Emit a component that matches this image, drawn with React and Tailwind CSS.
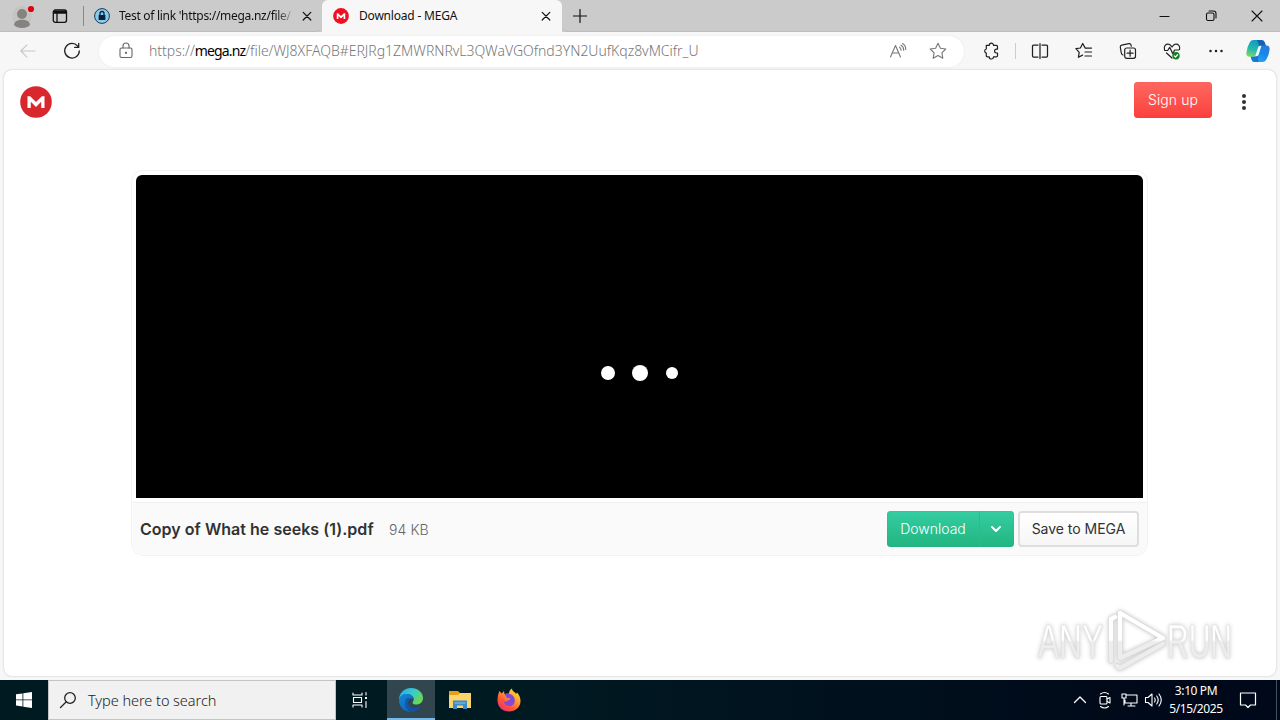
import React from 'react';

const Icon = ({ w = 20, h = 20, className = '', children, sw = 1.1 }) => (
  <svg width={w} height={h} viewBox={`0 0 ${w} ${h}`} fill="none" stroke="currentColor" strokeWidth={sw} strokeLinecap="round" strokeLinejoin="round" className={`block shrink-0 ${className}`}>
    {children}
  </svg>
);

const Cross = () => (
  <Icon w={10} h={10} sw={1.2}><path d="M1.2 1.4l7.6 7.600M8.800 1.400l-7.600 7.600" /></Icon>
);

const MegaMark = ({ size, fill = '#d9272e' }) => (
  <svg width={size} height={size} viewBox="0 0 32 32" className="block shrink-0">
    <circle cx="16" cy="16" r="15.8" fill={fill} />
    <path d="M7.5 22V10.300h2.700l5.800 5.800 5.800-5.800h2.700V22h-3.300v-6.200L16 21l-5.200-5.200V22z" fill="#fff" />
  </svg>
);

function TabStrip() {
  return (
    <div className="flex h-8 w-full bg-[#cbcbcb] text-[#111]">
      <div className="flex h-8 w-[322px] items-center border-b border-[#bdbdbd] rounded-br-md">
        <svg width="24" height="26" viewBox="0 0 24 26" className="ml-3 mt-1 block">
          <circle cx="10" cy="11" r="10" fill="#c6c4c2" />
          <circle cx="10" cy="9" r="5" fill="#858380" />
          <path d="M2 20c0-7 16-7 16 0-3 4-13 4-16 0z" fill="#858380" />
          <circle cx="19" cy="4" r="3.1" fill="#e3000f" />
        </svg>
        <Icon w={16} h={16} className="ml-4" sw={1.3}>
          <rect x="1.3" y="2" width="13.2" height="12.300" rx="2" />
          <path d="M2 3.500h12M2 5h12M5 5v9" />
        </Icon>
        <div className="ml-[15px] h-5 w-px bg-[#888]" />
        <svg width="16" height="16" viewBox="0 0 16 16" className="ml-[10px] block">
          <circle cx="8" cy="8" r="7.4" fill="#8ccbef" stroke="#123c58" strokeWidth="1" />
          <rect x="4.6" y="7" width="6.8" height="5" rx=".6" fill="#0a2436" />
          <path d="M6 7V5.5a2 2 0 014 0V7" fill="none" stroke="#0a2436" strokeWidth="1.3" />
        </svg>
        <div className="ml-[9px] w-[174px] whitespace-nowrap bg-linear-to-r from-[#111] from-90% to-[#bbb] bg-clip-text font-['Noto_Sans',sans-serif] text-[12px] leading-5 tracking-[-0.29px] text-transparent">Test of link 'https://mega.nz/file/</div>
        <div className="ml-[9px]"><Cross /></div>
      </div>
      <div className="flex h-8 w-60 items-center rounded-t-md bg-[#f7f7f7]">
        <div className="ml-[11px]"><MegaMark size={16} fill="#ee1024" /></div>
        <div className="ml-[10px] w-[173px] whitespace-nowrap font-['Noto_Sans',sans-serif] text-[12px] leading-5 tracking-[-0.2px]">Download - MEGA</div>
        <div className="ml-[9px]"><Cross /></div>
      </div>
      <div className="flex h-8 flex-1 items-center rounded-bl-md border-b border-[#bdbdbd]">
        <Icon w={14} h={14} className="ml-[10.500px]" sw={1.2}><path d="M7 .5v13M.5 7h13" /></Icon>
        <div className="ml-auto flex w-[138px]">
          <div className="flex w-[46px] justify-center"><Icon w={12} h={12}><path d="M1 6.5h9" /></Icon></div>
          <div className="flex w-[46px] justify-center"><Icon w={12} h={12}><rect x="1.5" y="3" width="7.5" height="7.5" rx="1.5" /><path d="M4 1h4.5Q11 1 11 3.5V8" /></Icon></div>
          <div className="flex w-[46px] justify-center"><Icon w={12} h={12}><path d="M1 1l10 10M11 1L1 11" /></Icon></div>
        </div>
      </div>
    </div>
  );
}

const Tool = ({ children }) => <div className="flex w-11 justify-center">{children}</div>;

function Toolbar() {
  return (
    <div className="flex h-[38px] w-full items-center bg-[#f7f7f7] text-[#202020]">
      <div className="ml-[6px] flex w-11 justify-center text-[#c8c8c8]"><Icon w={18} h={18}><path d="M16 9H2M8 2.8L1.8 9 8 15.2" /></Icon></div>
      <div className="flex w-11 justify-center"><Icon w={18} h={18} sw={1.3}><path d="M14.7 4.2A7.3 7.3 0 1016.3 9M15.7 1.4v4h-4" /></Icon></div>
      <div className="ml-[5px] flex h-[31px] w-[865px] items-center rounded-full bg-white text-[#777] shadow-[0_0_2px_#e5e5e5]">
        <Icon w={16} h={18} className="ml-[19px] text-[#666]"><rect x="2" y="6" width="12" height="9.5" rx="1.5" /><path d="M5 6V4a3 3 0 016 0v2" /><circle cx="8" cy="10.8" r=".6" fill="currentColor" /></Icon>
        <div className="ml-[15px] whitespace-nowrap font-['Noto_Sans',sans-serif] text-[14px] font-light leading-5 tracking-[-0.02px]">https://<span className="font-normal tracking-[-0.850px] text-black">mega.nz</span>/file/WJ8XFAQB#ERJRg1ZMWRNRvL3QWaVGOfnd3YN2UufKqz8vMCifr_U</div>
        <div className="ml-auto mr-[16px] flex items-center gap-[21px]">
          <Icon w={18} h={18}><path d="M1.500 15L6.500 3.500 11.500 15M3.400 11h6.200M10.500 5.200q1.600 1 1.600 3M12 3.200q2.800 1.600 2.700 5M13.500 1.500q3.500 2 3.200 6" /></Icon>
          <Icon w={20} h={18}><path d="M10 1.200l2.400 5 5.400.8-3.900 3.800.9 5.400-4.800-2.600-4.800 2.600.9-5.400L2.200 7l5.400-.8z" /></Icon>
        </div>
      </div>
      <div className="ml-[5px]"><Tool><Icon w={18} h={18} sw={1.2}><path d="M4.300 3.300h3a2.100 2.100 0 014.200 0h2.800q1.200 0 1.200 1.200v2.700h-1a1.900 1.900 0 000 3.800h1v2.700q0 1.200-1.200 1.200h-2.800a2.100 2.100 0 01-4.200 0H5.500q-1.200 0-1.200-1.200v-2.600a2.100 2.100 0 010-4.100z" /></Icon></Tool></div>
      <div className="ml-[2px] h-4 w-px bg-[#ccc]" />
      <div className="ml-[2px] flex">
        <Tool><Icon w={18} h={18} sw={1.25}><path d="M7 3H2.500Q1.500 3 1.500 4v10q0 1 1 1H7M11 3h4.500q1 0 1 1v10q0 1-1 1H11M9 1.500v15" /></Icon></Tool>
        <Tool><Icon w={18} h={18} sw={1.2}><path d="M10.200 6.100L7.700 1.500 5.400 6l-4.500.7 3.300 3.600-.8 5 4.200-2.200M10.200 6.100h6.300M10 10h6.500M10 14h6.500" /></Icon></Tool>
        <Tool><Icon w={18} h={18} sw={1.2}><path d="M4 13Q2.600 12.700 2.300 11L1.300 5.200Q1 3.600 2.700 3.200l7.200-1.500q1.700-.3 2.200 1.400l.2 1.100" /><rect x="5.700" y="6" width="10.800" height="10.300" rx="2" /><path d="M11.100 8.200v6M8.100 11.200h6" /></Icon></Tool>
        <Tool><Icon w={18} h={18} sw={1.2}><path d="M1.500 7.500C.5 4 3 1.700 5.500 2.200 7.400 2.400 8.400 4 9 5c.6-1 1.600-2.600 3.500-2.800C15 1.700 17.500 4 16.500 7.500M1.500 8.500h3.200l2-3.200 3 6.200 2-3.500h4M3.500 11l5.500 5" /><circle cx="13" cy="13.800" r="3.700" fill="#108022" stroke="none" /><path d="M11.300 13.900l1.200 1.100 2.200-2.300" stroke="#fff" /></Icon></Tool>
        <Tool><Icon w={18} h={18}><g fill="currentColor" stroke="none"><circle cx="3.500" cy="9" r="1.250" /><circle cx="9" cy="9" r="1.250" /><circle cx="14.500" cy="9" r="1.250" /></g></Icon></Tool>
      </div>
      <svg width="24" height="24" viewBox="0 0 24 24" className="ml-[8px] block">
        <defs>
          <linearGradient id="copA" x1=".5" y1="0" x2=".2" y2="1"><stop stopColor="#1398bd" /><stop offset=".55" stopColor="#25b8b0" /><stop offset="1" stopColor="#7fdc5a" /></linearGradient>
          <linearGradient id="copB" x1=".8" y1="0" x2=".3" y2="1"><stop stopColor="#2a78df" /><stop offset=".5" stopColor="#1689e8" /><stop offset="1" stopColor="#27aaf5" /></linearGradient>
        </defs>
        <path d="M7.500 1h8q2.600 0 3.300 2.500l1 3.500H16q-2.500 0-3.300 2.500L10.500 16q-.6 1.800-2.700 1.800H3.500Q0 17.800.4 13.500 1 8 3.800 3.200 5 1 7.500 1z" fill="url(#copA)" />
        <path d="M11 1h4.500q2.600 0 3.300 2.500l1 3.500H16q-1.500 0-2.400 1z" fill="#1560b5" />
        <path d="M16.500 23H8.800q-2.600 0-3.300-2.500l-.8-2.700H8q2.300 0 3-2.300L13 9q.8-2.500 3.300-2.500h4.200q3.500 0 3.100 4.300-.6 5.500-3.400 10-1.300 2.200-3.700 2.200z" fill="url(#copB)" />
        <path d="M4.700 17.800H8q2.300 0 3-2.300l.8-2.500.7 10H8.800q-2.600 0-3.300-2.500z" fill="#1468c8" opacity=".75" />
        <path d="M12.200 8.300q.6-1.500 2-1.500h1.200l-2.600 8.400q-.6 2-2.400 2H9.200z" fill="#f2fbff" />
      </svg>
    </div>
  );
}

function Watermark() {
  return (
    <svg width="208" height="72" viewBox="-2 -2 208 72" className="absolute left-[1034px] top-[605px] overflow-visible drop-shadow-[0_0_2px_#c4c4c4]">
      <defs><linearGradient id="wm" gradientUnits="userSpaceOnUse" x1="0" y1="2" x2="0" y2="64"><stop offset=".5" stopColor="#ffffff" /><stop offset=".53" stopColor="#ededed" /></linearGradient></defs>
      <g fill="url(#wm)" stroke="#e0e0e0" strokeWidth=".5" fontFamily="'Liberation Sans Narrow', 'Liberation Sans', sans-serif" fontSize="49" fontWeight="400">
        <text x="2" y="51" textLength="65" lengthAdjust="spacingAndGlyphs">ANY</text>
        <text x="131" y="51" textLength="65" lengthAdjust="spacingAndGlyphs">RUN</text>
      </g>
      <g fill="none" strokeLinejoin="round" strokeLinecap="round">
        <path d="M79 10l-4 2v42M84 6v45l43-20zM84 6l43 25M84 61l43-24M84 61l-3-2" stroke="#dcdcdc" strokeWidth="5.500" />
        <path d="M79 10l-4 2v42M84 6v45l43-20zM84 6l43 25M84 61l43-24M84 61l-3-2" stroke="url(#wm)" strokeWidth="4.200" />
      </g>
    </svg>
  );
}

function Page() {
  return (
    <div className="mx-1 h-[606px] w-[1272px] rounded-lg bg-white shadow-[0_0_2px_#bbb] font-['Inter',sans-serif]">
      <div className="flex h-[61px] items-center pt-[2px]">
        <div className="ml-4"><MegaMark size={32} /></div>
        <button className="-mt-1 ml-auto h-9 w-[78px] rounded bg-linear-to-b from-[#ff6761] to-[#fb3e3c] text-[14px] font-light tracking-[0.1px] text-white shadow-[inset_0_0_1px_#ef2929]">Sign up</button>
        <div className="ml-[30px] mr-[30px] flex w-1 flex-col gap-[2px]">
          <i className="size-1 rounded-full bg-[#303233]" /><i className="size-1 rounded-full bg-[#303233]" /><i className="size-1 rounded-full bg-[#303233]" />
        </div>
      </div>
      <div className="ml-[127px] mt-[39px] h-[386px] w-[1017px] rounded-xl border border-[#f2f2f2] bg-white">
        <div className="mx-1 mt-1 flex h-[323px] items-center justify-center rounded-t-md bg-black pt-[72px]">
          <div className="flex w-20 items-center">
            <div className="ml-px size-[14px] rounded-full bg-white" />
            <div className="ml-[17px] size-4 rounded-full bg-white" />
            <div className="ml-[18px] size-3 rounded-full bg-white" />
          </div>
        </div>
        <div className="mt-1 flex h-[53px] items-center rounded-b-xl border-t border-[#f0f0f0] bg-[#fafafa] pl-2 pr-2">
          <div className="w-[249px] whitespace-nowrap text-[16px] font-semibold tracking-[0.03px] text-[#303233]">Copy of What he seeks (1).pdf</div>
          <div className="whitespace-nowrap text-[14px] font-light tracking-[0.1px] text-[#666]">94 KB</div>
          <div className="ml-auto flex h-9 w-[127px] rounded bg-linear-to-b from-[#34cda2] to-[#22b580] text-white shadow-[inset_0_0_1px_#009a70]">
            <div className="flex w-[92px] items-center justify-center pb-px text-[14px] font-light">Download</div>
            <div className="flex flex-1 items-center justify-center border-l border-[#28bd8c] pr-[2px]">
              <Icon w={12} h={8} sw={2}><path d="M2 2l4 4 4-4" /></Icon>
            </div>
          </div>
          <button className="ml-1 h-9 w-[121px] rounded border-2 border-[#dedede] bg-linear-to-b from-white to-[#f6f6f6] pb-px text-[14px] tracking-[-0.02px] text-[#303233]">Save to MEGA</button>
        </div>
      </div>
    </div>
  );
}

function Taskbar() {
  return (
    <div className="flex h-10 w-full bg-linear-to-r from-[#001a22] from-40% to-[#000919] to-90% text-white">
      <div className="flex w-12 items-center justify-center">
        <svg width="16" height="16" viewBox="0 0 16 16" fill="#fff"><path d="M0 2.300l6.500-.9v6.100H0zM7.300 1.300L16 0v7.500H7.300zM0 8.300h6.500v6.100L0 13.500zM7.300 8.300H16V16l-8.700-1.300z" /></svg>
      </div>
      <div className="flex w-[288px] items-center border border-[#c4c4c4] bg-[#f1f1f1] text-[#222]">
        <Icon w={18} h={18} className="ml-[10px]" sw={1.300}><circle cx="11" cy="7" r="5.300" /><path d="M7.300 10.700L1.500 16.500" /></Icon>
        <div className="ml-[11px] mt-px whitespace-nowrap font-['Noto_Sans',sans-serif] text-[14.500px] font-light tracking-[-0.050px]">Type here to search</div>
      </div>
      <div className="flex w-[51px] items-center justify-center pr-[4px]">
        <Icon w={18} h={18}><path d="M2 2v2h9V2M2 16v-2h9v2M2.500 6.500h8v5h-8zM15 1.500V4M15 10.500v6" /><path d="M14 6h2v2h-2z" fill="currentColor" stroke="none" /></Icon>
      </div>
      <div className="flex w-12 items-center justify-center border-b-2 border-[#76b9ed] bg-[#31464f]">
        <svg width="24" height="24" viewBox="0 0 24 24" className="mt-px">
          <defs>
            <linearGradient id="edT" x1="0" y1="0" x2="1" y2=".5"><stop stopColor="#2aa5e5" /><stop offset=".55" stopColor="#36cbd0" /><stop offset="1" stopColor="#6bd653" /></linearGradient>
            <linearGradient id="edB" x1="0" y1="0" x2="1" y2="1"><stop stopColor="#1288db" /><stop offset="1" stopColor="#1157a9" /></linearGradient>
          </defs>
          <path d="M0 12C0 5 5 0 12 0c7 0 12 4.500 12 10 0 4-3 6.500-6.500 6.500-2.500 0-4-.8-4-1.800s1.200-1.500 1.200-3.500C14.700 8 11 6 7.500 6 4 6 1 8.500 0 12z" fill="url(#edT)" />
          <path d="M0 12C1 8 4 6 7.500 6c4 0 7 2 7.200 5C12 9.500 9 12 9 15c0 4 5 7 12.500 3.500C19.500 22 16 24 12 24 5 24 0 19 0 12z" fill="url(#edB)" />
          <path d="M8 10c-3 3-3 10 3 14 4 .3 8-1.500 10.500-5.500C15 21.500 9.500 19 9 15c0-2 1.500-4.500 4-5z" fill="#124c96" opacity=".65" />
        </svg>
      </div>
      <div className="flex w-[49px] items-center justify-center">
        <svg width="22" height="20" viewBox="0 0 22 20"><path d="M0 1h9l2 2h11v4H0z" fill="#e5a01a" /><path d="M0 5h9l2-2h11v15H0z" fill="#fbd56b" /><path d="M4 10.500h14V19h-4v-3.500H8V19H4z" fill="#3a8cc8" /><path d="M5.500 12h11v2h-11z" fill="#62a9d8" /></svg>
      </div>
      <div className="flex w-[49px] items-center justify-center">
        <svg width="24" height="24" viewBox="0 0 24 24">
          <defs><linearGradient id="ff" x1="1" y1="0" x2=".25" y2="1"><stop stopColor="#fff04f" /><stop offset=".35" stopColor="#ffb02a" /><stop offset=".7" stopColor="#ff5a38" /><stop offset="1" stopColor="#f02c6c" /></linearGradient></defs>
          <path d="M2.500 3l2.200 2.500L7 3l.5 3L12 5.500c0-2 1-4 3-5 0 3 3 3 4 5.500l1-1.500c2 2 3.500 5 3.500 8.500C23.500 19 18.500 23.500 12 23.500S.5 19 .5 12.500C.5 9 1 6 2.500 3z" fill="url(#ff)" />
          <path d="M7.500 6.500Q10 5 12.500 6c3.500.5 5.500 3.500 5.300 7-.3 3-2.600 5-5.600 5-3 0-5.200-2-5.200-4.700 1.500.7 3 .5 4-.8l2.500-1.300c-.2-1.200-3.300-.8-3.800-1.700C9 8.500 8.700 7.500 7.500 6.500z" fill="#8348d5" />
        </svg>
      </div>
      <div className="ml-auto flex items-center">
        <Icon w={14} h={12} sw={1.300}><path d="M1.500 8.500L7 3l5.500 5.500" /></Icon>
        <Icon w={16} h={18} className="ml-[10px]"><rect x="3" y="5.500" width="7" height="7.500" rx="1" /><path d="M10 8l3-1.500v5.500L10 10.500M3.500 3q4-3 8 0M3.500 15.500q4 3 8 0" /></Icon>
        <Icon w={18} h={18} className="ml-[7px]"><path d="M6 4h11v8H5V9M2 3h4v4H2zM4 7v7M8 15h7M11 12v3" /></Icon>
        <Icon w={18} h={18} className="ml-[6px]"><path d="M1.500 6.500H4L8 3v12l-4-3.500H1.500zM10.500 7q1.500 2 0 4M12.700 5q3 4 0 8M15 3q4.500 6 0 12" /></Icon>
        <div className="ml-[4px] w-[60px] whitespace-nowrap text-center font-['Noto_Sans',sans-serif] text-[12px] leading-[18px] tracking-[-0.400px]">
          <div>3:10 PM</div><div>5/15/2025</div>
        </div>
        <Icon w={18} h={18} className="ml-[13px] mr-[19px]" sw={1.200}><path d="M1.500 2h15v12h-5L9 16.500 6.500 14h-5z" /></Icon>
        <div className="mr-[3px] h-10 w-px bg-[#40505c]" />
      </div>
    </div>
  );
}

export default function App() {
  return (
    <div className="relative h-[720px] w-[1280px] overflow-hidden bg-[#f7f7f7]">
      <TabStrip />
      <Toolbar />
      <Page />
      <div className="h-1" />
      <Taskbar />
      <Watermark />
    </div>
  );
}
